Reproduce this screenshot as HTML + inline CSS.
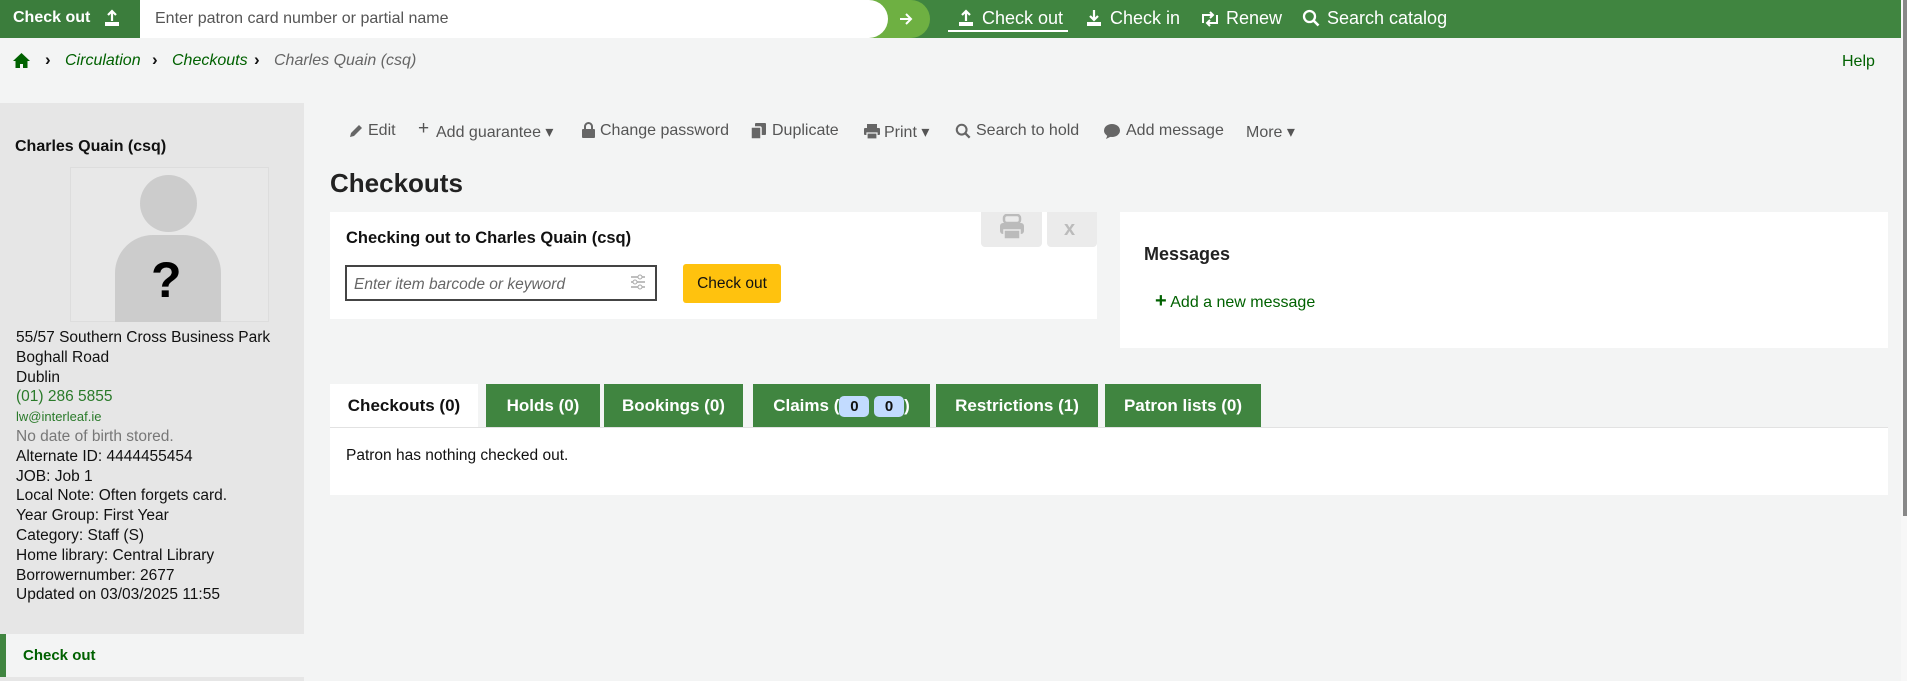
<!DOCTYPE html>
<html><head><meta charset="utf-8"><style>
*{box-sizing:border-box;margin:0;padding:0}
body{width:1907px;height:681px;overflow:hidden;background:#f3f4f4;font-family:"Liberation Sans",sans-serif;color:#111;position:relative;font-size:16px}
.a{position:absolute;white-space:nowrap}
.top{left:0;top:0;width:1902px;height:38px;background:#408540}
.g{color:#006100}
.nav{color:#fff;font-size:18px;top:8px}
.tb{top:122px;font-size:16px;color:#555}
.side{left:0;top:103px;width:304px;height:578px;background:#e6e6e6}
.tab{top:384px;height:43px;background:#408540;color:#fff;font-weight:bold;font-size:17px;line-height:43px;text-align:center}
.chev{top:50px;font-size:17px;font-weight:bold}
</style></head><body>
<div class="a top"></div>
<div class="a" style="left:0;top:0;width:160px;height:38px;background:#3b7d3c;border-radius:0 19px 19px 0"></div>
<div class="a" style="left:13px;top:9px;color:#fff;font-weight:bold;font-size:16px">Check out</div>
<svg class="a" style="left:103px;top:9px" width="18" height="18" viewBox="0 0 18 18"><path d="M9 2v10M5 6l4-4 4 4" stroke="#fff" stroke-width="2.2" fill="none"/><rect x="2" y="13" width="14" height="4" fill="#fff"/></svg>
<div class="a" style="left:140px;top:0;width:790px;height:38px;background:#6eb042;border-radius:0 19px 19px 0"></div>
<div class="a" style="left:140px;top:0;width:748px;height:38px;background:#fff;border-radius:0 19px 19px 0"></div>
<div class="a" style="left:155px;top:10px;color:#555;font-size:16px">Enter patron card number or partial name</div>
<svg class="a" style="left:898px;top:11px" width="16" height="16" viewBox="0 0 16 16"><path d="M2 8h11M8 3l5 5-5 5" stroke="#fff" stroke-width="2" fill="none"/></svg>
<svg class="a" style="left:957px;top:9px" width="18" height="18" viewBox="0 0 18 18"><path d="M9 2v10M5 6l4-4 4 4" stroke="#fff" stroke-width="2.2" fill="none"/><rect x="2" y="13" width="14" height="4" fill="#fff"/></svg>
<div class="a nav" style="left:982px">Check out</div>
<div class="a" style="left:948px;top:30px;width:120px;height:2px;background:#fff"></div>
<svg class="a" style="left:1085px;top:9px" width="18" height="18" viewBox="0 0 18 18"><path d="M9 1v10M5 7l4 4 4-4" stroke="#fff" stroke-width="2.2" fill="none"/><rect x="2" y="13" width="14" height="4" fill="#fff"/></svg>
<div class="a nav" style="left:1110px">Check in</div>
<svg class="a" style="left:1200px;top:11px" width="20" height="16" viewBox="0 0 20 16"><path d="M3 12V4h10M10 1l3 3-3 3M17 4v8H7M10 15l-3-3 3-3" stroke="#fff" stroke-width="2" fill="none"/></svg>
<div class="a nav" style="left:1226px">Renew</div>
<svg class="a" style="left:1302px;top:9px" width="18" height="18" viewBox="0 0 18 18"><circle cx="7.5" cy="7.5" r="5.5" stroke="#fff" stroke-width="2.3" fill="none"/><path d="M11.5 11.5l5 5" stroke="#fff" stroke-width="2.6"/></svg>
<div class="a nav" style="left:1327px">Search catalog</div>

<svg class="a" style="left:13px;top:53px" width="17" height="15" viewBox="0 0 17 15"><path d="M8.5 0L0 8h2.5v7h4.5v-4h3v4h4.5V8H17z" fill="#006100"/></svg>
<div class="a chev" style="left:45px">›</div>
<div class="a g" style="left:65px;top:52px;font-style:italic;font-size:16px">Circulation</div>
<div class="a chev" style="left:152px">›</div>
<div class="a g" style="left:172px;top:52px;font-style:italic;font-size:16px">Checkouts</div>
<div class="a chev" style="left:254px">›</div>
<div class="a" style="left:274px;top:52px;font-style:italic;font-size:16px;color:#666">Charles Quain (csq)</div>
<div class="a g" style="left:1842px;top:53px;font-size:16px">Help</div>

<div class="a side"></div>
<div class="a" style="left:15px;top:138px;font-weight:bold;font-size:16px">Charles Quain (csq)</div>
<div class="a" style="left:70px;top:167px;width:199px;height:155px;background:#e8e8e8;border:1px solid #ddd"></div>
<div class="a" style="left:140px;top:175px;width:57px;height:57px;border-radius:50%;background:#ccc"></div>
<div class="a" style="left:115px;top:235px;width:106px;height:87px;background:#ccc;border-radius:38px 38px 0 0"></div>
<div class="a" style="left:151px;top:252px;font-size:50px;line-height:56px;font-weight:bold;color:#000">?</div>
<div class="a" style="left:16px;top:328px;font-size:15.5px;line-height:19.8px">55/57 Southern Cross Business Park<br>Boghall Road<br>Dublin<br><span style="color:#2a7a2a">(01) 286 5855</span><br><span style="color:#2a7a2a;font-size:13px">lw@interleaf.ie</span><br><span style="color:#777">No date of birth stored.</span><br>Alternate ID: 4444455454<br>JOB: Job 1<br>Local Note: Often forgets card.<br>Year Group: First Year<br>Category: Staff (S)<br>Home library: Central Library<br>Borrowernumber: 2677<br>Updated on 03/03/2025 11:55</div>
<div class="a" style="left:0;top:634px;width:304px;height:43px;background:#f3f4f4;border-left:6px solid #408540"></div>
<div class="a g" style="left:23px;top:647px;font-weight:bold;font-size:15px">Check out</div>

<svg class="a" style="left:348px;top:124px" width="15" height="15" viewBox="0 0 15 15"><path d="M2 13l1-4 8-8 3 3-8 8z" fill="#666"/></svg>
<div class="a tb" style="left:368px">Edit</div>
<div class="a tb" style="left:418px;font-size:19px;top:118px">+</div>
<div class="a tb" style="left:436px">Add guarantee ▾</div>
<svg class="a" style="left:582px;top:122px" width="13" height="16" viewBox="0 0 13 16"><path d="M3 7V4.5a3.5 3.5 0 0 1 7 0V7" stroke="#666" stroke-width="2" fill="none"/><rect x="0" y="7" width="13" height="9" rx="1" fill="#666"/></svg>
<div class="a tb" style="left:600px">Change password</div>
<svg class="a" style="left:751px;top:123px" width="15" height="16" viewBox="0 0 15 16"><rect x="4" y="0" width="11" height="12" rx="1" fill="#666"/><rect x="0" y="4" width="10" height="12" rx="1" fill="#666" stroke="#f3f4f4" stroke-width="1.5"/></svg>
<div class="a tb" style="left:772px">Duplicate</div>
<svg class="a" style="left:864px;top:124px" width="16" height="15" viewBox="0 0 16 15"><rect x="3" y="0" width="10" height="4" fill="#666"/><rect x="0" y="4" width="16" height="7" rx="1" fill="#666"/><rect x="3" y="9" width="10" height="6" fill="#666" stroke="#f3f4f4" stroke-width="1.2"/></svg>
<div class="a tb" style="left:884px">Print ▾</div>
<svg class="a" style="left:955px;top:123px" width="16" height="16" viewBox="0 0 18 18"><circle cx="7.5" cy="7.5" r="5.5" stroke="#666" stroke-width="2.3" fill="none"/><path d="M11.5 11.5l5 5" stroke="#666" stroke-width="2.6"/></svg>
<div class="a tb" style="left:976px">Search to hold</div>
<svg class="a" style="left:1104px;top:124px" width="16" height="15" viewBox="0 0 16 15"><ellipse cx="8" cy="6.5" rx="8" ry="6.5" fill="#666"/><path d="M2 15l2-5 4 2z" fill="#666"/></svg>
<div class="a tb" style="left:1126px">Add message</div>
<div class="a tb" style="left:1246px">More ▾</div>

<div class="a" style="left:330px;top:168px;font-weight:bold;font-size:26px;color:#222">Checkouts</div>

<div class="a" style="left:330px;top:212px;width:767px;height:107px;background:#fff"></div>
<div class="a" style="left:981px;top:212px;width:61px;height:35px;background:#ebebeb;border-radius:0 0 4px 4px"></div>
<svg class="a" style="left:1000px;top:214px" width="24" height="26" viewBox="0 0 24 26"><rect x="4" y="1" width="16" height="8" rx="3" fill="none" stroke="#bbb" stroke-width="2.5"/><rect x="0" y="9" width="24" height="11" rx="3" fill="#bbb"/><rect x="4" y="16" width="16" height="9" fill="#bbb" stroke="#ebebeb" stroke-width="1.5"/></svg>
<div class="a" style="left:1047px;top:212px;width:50px;height:35px;background:#ebebeb;border-radius:0 0 4px 4px"></div>
<div class="a" style="left:1064px;top:218px;color:#bbb;font-weight:bold;font-size:20px">x</div>
<div class="a" style="left:346px;top:229px;font-weight:bold;font-size:16.5px">Checking out to Charles Quain (csq)</div>
<div class="a" style="left:345px;top:265px;width:312px;height:36px;border:2px solid #444;background:#fff"></div>
<div class="a" style="left:354px;top:276px;font-style:italic;color:#666;font-size:15.5px">Enter item barcode or keyword</div>
<svg class="a" style="left:630px;top:273px" width="16" height="18" viewBox="0 0 16 18"><path d="M1 4h14M1 9h14M1 14h14" stroke="#aaa" stroke-width="1.5"/><circle cx="10" cy="4" r="2" fill="#fff" stroke="#aaa"/><circle cx="5" cy="9" r="2" fill="#fff" stroke="#aaa"/><circle cx="10" cy="14" r="2" fill="#fff" stroke="#aaa"/></svg>
<div class="a" style="left:683px;top:264px;width:98px;height:39px;background:#ffc20e;border-radius:3px;text-align:center;line-height:39px;font-size:15.5px">Check out</div>

<div class="a" style="left:1120px;top:212px;width:768px;height:136px;background:#fff"></div>
<div class="a" style="left:1144px;top:244px;font-weight:bold;font-size:18px;color:#222">Messages</div>
<div class="a g" style="left:1155px;top:293px;font-size:16px"><b style="font-size:20px;line-height:16px">+</b> Add a new message</div>

<div class="a" style="left:330px;top:384px;width:148px;height:44px;background:#fff;font-weight:bold;font-size:17px;line-height:43px;text-align:center">Checkouts (0)</div>
<div class="a tab" style="left:486px;width:114px">Holds (0)</div>
<div class="a tab" style="left:604px;width:139px">Bookings (0)</div>
<div class="a tab" style="left:753px;width:177px">Claims (<span style="display:inline-block;background:#c2dbff;color:#111;border-radius:5px;width:30px;height:21px;line-height:21px;font-size:15px">0</span> <span style="display:inline-block;background:#c2dbff;color:#111;border-radius:5px;width:30px;height:21px;line-height:21px;font-size:15px">0</span>)</div>
<div class="a tab" style="left:936px;width:162px">Restrictions (1)</div>
<div class="a tab" style="left:1105px;width:156px">Patron lists (0)</div>
<div class="a" style="left:330px;top:427px;width:1558px;height:68px;background:#fff;border-top:1px solid #e2e2e2"></div>
<div class="a" style="left:346px;top:447px;font-size:15.5px">Patron has nothing checked out.</div>

<div class="a" style="left:1901px;top:0;width:6px;height:681px;background:#f7f7f7"></div>
<div class="a" style="left:1903px;top:0;width:4px;height:516px;background:#888"></div>
</body></html>
